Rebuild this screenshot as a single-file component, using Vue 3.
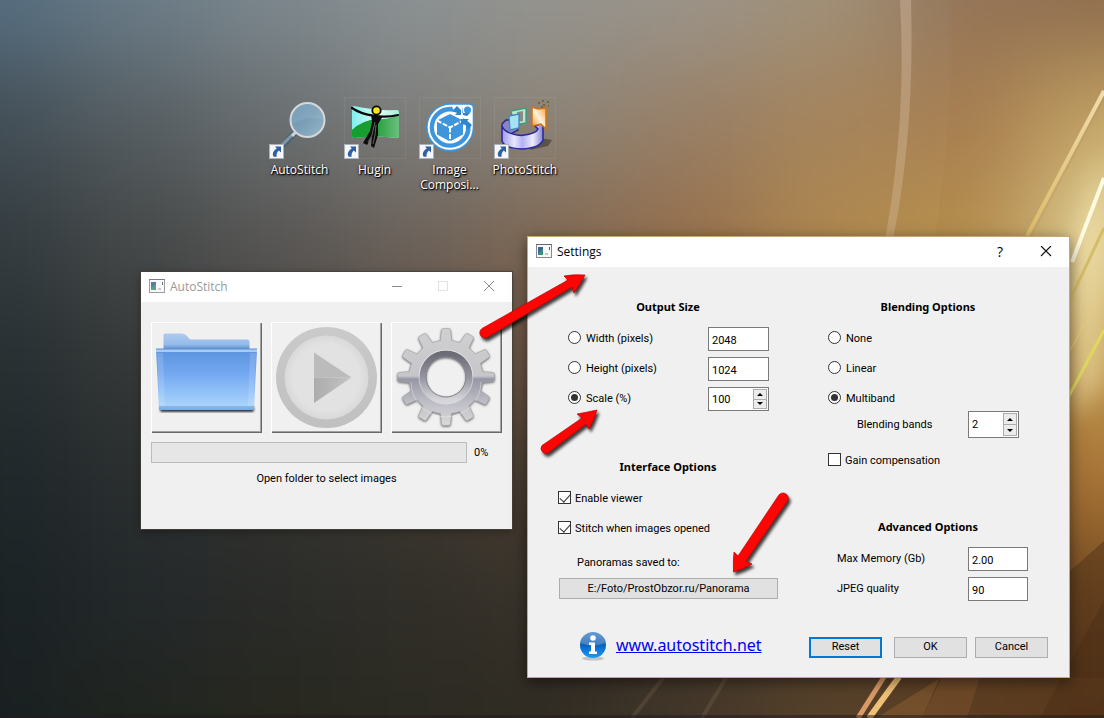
<script setup>
import { ref } from 'vue'

const sizeMode = ref('scale')
const blendMode = ref('multiband')
const width = ref('2048')
const height = ref('1024')
const scale = ref(100)
const bands = ref(2)
const gain = ref(false)
const viewer = ref(true)
const autoStitch = ref(true)
const memory = ref('2.00')
const quality = ref('90')

// Wallpaper colour field: one colour per grid node, softened by a blur.
const field = [
  ['#566e80', '#6b7c88', '#7d888e', '#8c9294', '#95948f', '#9b948a', '#a09078', '#93765c', '#8c6c50'],
  ['#424e56', '#565e62', '#696e70', '#7e7e7c', '#8c8478', '#987f66', '#a5845c', '#a87f52', '#c8aa68'],
  ['#333b3f', '#454848', '#585654', '#6c625a', '#806853', '#966f4c', '#b0884e', '#b8924e', '#e2d29a'],
  ['#272f32', '#353837', '#444240', '#584c42', '#6e5644', '#80603f', '#9a7440', '#a88044', '#c09a50'],
  ['#1f272a', '#2a2e2f', '#33332f', '#3d3831', '#4a3d30', '#5a452e', '#7a5a34', '#8c6030', '#a97436'],
  ['#1b2224', '#23282a', '#2a2b29', '#302e28', '#38322a', '#44382a', '#5c442a', '#644322', '#70481f'],
  ['#191f20', '#20241f', '#27271f', '#2b2a22', '#302b22', '#42362a', '#54402a', '#5a3c22', '#55361c']
]

const gearPath = (() => {
  const pt = (r, deg) => {
    const a = ((deg - 90) * Math.PI) / 180
    return (55 + r * Math.cos(a)).toFixed(1) + ' ' + (55 + r * Math.sin(a)).toFixed(1)
  }
  let d = ''
  for (let i = 0; i < 12; i++) {
    const c = i * 30
    d += (i ? 'L' : 'M') + pt(37, c - 8.5) + 'L' + pt(47, c - 5.5) + 'Q' + pt(48.5, c - 5) + ' ' + pt(48.5, c - 3.5)
    d += 'L' + pt(48.5, c + 3.5) + 'Q' + pt(48.5, c + 5) + ' ' + pt(47, c + 5.5) + 'L' + pt(37, c + 8.5)
    d += 'A37 37 0 0 1 ' + pt(37, c + 21.5)
  }
  return d + 'Z M75 55A20 20 0 1 0 35 55A20 20 0 1 0 75 55Z'
})()
</script>

<template>
  <main class="desktop">
    <svg class="wallpaper" viewBox="0 0 1104 718" preserveAspectRatio="none" aria-hidden="true">
      <defs>
        <filter id="soft" x="-20%" y="-20%" width="140%" height="140%" color-interpolation-filters="sRGB"><feGaussianBlur stdDeviation="48" /></filter>
        <filter id="glow" x="-100%" y="-50%" width="300%" height="200%" color-interpolation-filters="sRGB"><feGaussianBlur stdDeviation="12" /></filter>
        <linearGradient id="ray" x1="0" y1="0" x2="0" y2="1"><stop offset="0" stop-color="#f0dcae" /><stop offset="1" stop-color="#dcbc68" /></linearGradient>
        <linearGradient id="arc" x1="0" y1="0" x2="0" y2="1"><stop offset="0" stop-color="#c4a890" stop-opacity=".6" /><stop offset="1" stop-color="#c9ad80" stop-opacity=".55" /></linearGradient>
      </defs>
      <g filter="url(#soft)">
        <template v-for="(row, r) in field" :key="r">
          <rect
            v-for="(c, i) in row" :key="i" :fill="c"
            :x="i === 0 ? -300 : i * 138 - 69" :y="r === 0 ? -300 : r * 120 - 60"
            :width="i === 0 || i === 8 ? 371 : 140" :height="r === 0 || r === 6 ? 362 : 122"
          />
        </template>
      </g>
      <path d="M900 0H911Q915 130 893 240H885Q907 120 900 0Z" fill="url(#arc)" />
      <path d="M952 0Q953 130 934 240H1030L1104 100V0Z" fill="#a06a3c" opacity=".1" />
      <path d="M1104 150L1072 245V420L1104 380Z" fill="#fff4c0" opacity=".5" filter="url(#glow)" />
      <path d="M1104 91L1027 236" stroke="url(#ray)" stroke-width="4" />
      <path d="M1104 178L1072 262" stroke="#fffbe0" stroke-width="4" />
      <path d="M1104 228L1070 300" stroke="#d4bd68" stroke-width="3" />
      <path d="M1104 330L1069 396" stroke="#dfd760" stroke-width="3" />
      <path d="M1104 290L1069 352" stroke="#e6cb85" stroke-width="1" />
      <path d="M1104 541L1069 572V678H1104Z" fill="#4c2f18" opacity=".45" />
      <path d="M1104 600L1040 718H1104Z" fill="#422814" opacity=".3" />
      <path d="M942 677L876 718H922L940 677Z" fill="#9a6a38" opacity=".4" />
      <path d="M980 677L967 718H922L942 677Z" fill="#8c5c30" opacity=".35" />
      <path d="M884 677L858 718" stroke="#d99a68" stroke-width="5" />
      <path d="M899 677L869 718" stroke="#efc078" stroke-width="6" />
      <path d="M663 678L632 718M726 678L702 718" stroke="#8a735a" stroke-width="4" opacity=".25" />
      <rect y="715" width="1104" height="3" fill="#221a20" opacity=".5" />
    </svg>

    <svg class="sprites" aria-hidden="true">
      <symbol id="shortcut" viewBox="0 0 15 15">
        <rect width="15" height="15" fill="#a9b0b8" /><rect x="1" y="1" width="13" height="13" fill="#f5f7fa" />
        <path d="M6 2.500H12V8.500L9.800 6.500C8 8.200 7.300 10 7.600 12.800H4.600C2.800 9.500 4.500 6.500 7.800 4.500Z" fill="#2c5fa4" />
      </symbol>
      <symbol id="appicon" viewBox="0 0 16 14">
        <rect x=".5" y=".5" width="15" height="13" fill="#f8f8f8" stroke="#8a8a90" />
        <path d="M0 .5H16" stroke="#66676b" />
        <rect x="2" y="3" width="5" height="8" fill="#3b8f7c" /><path d="M2 3H7V5L2 9Z" fill="#3c6596" />
        <path d="M13.500 3V6" stroke="#4b5870" /><rect x="9" y="9" width="3" height="2" fill="#c3c6c9" />
      </symbol>
    </svg>

    <nav class="shortcuts" aria-label="Desktop">
      <button class="shortcut" type="button">
        <svg viewBox="0 0 62 62">
          <defs><linearGradient id="lens" x1="0" y1="0" x2="1" y2="1"><stop offset="0" stop-color="#6b95b5" /><stop offset=".5" stop-color="#7b9fb8" /><stop offset="1" stop-color="#9ab7c8" /></linearGradient></defs>
          <path d="M25 36L14 49" stroke="#4d6472" stroke-width="6" />
          <path d="M25 36L13 48" stroke="#7f98a8" stroke-width="3" />
          <path d="M28 34L23 39" stroke="#cdd3d8" stroke-width="3" />
          <circle cx="38.500" cy="23" r="17" fill="url(#lens)" stroke="#d3d7da" stroke-width="2" />
          <path d="M22 23A16.500 16.500 0 0 1 55 23Q38 18 22 27Z" fill="#fff" opacity=".08" />
          <use href="#shortcut" y="47" width="15" height="15" />
        </svg>
        <span>AutoStitch</span>
      </button>
      <button class="shortcut framed" type="button">
        <svg viewBox="0 0 62 62">
          <defs>
            <linearGradient id="sky" x1="0" x2="1"><stop offset="0" stop-color="#7ff0ee" /><stop offset=".6" stop-color="#e0fbf4" /><stop offset="1" stop-color="#9ff0dc" /></linearGradient>
            <linearGradient id="grass" x1="0" x2="1"><stop offset="0" stop-color="#12a02a" /><stop offset=".45" stop-color="#1c9c34" /><stop offset="1" stop-color="#6cbf7e" /></linearGradient>
          </defs>
          <path d="M10 9Q32 14 53 13Q55 13 55 15V39Q55 41 53 41Q32 38 10 41Q8 41 8 39V11Q8 9 10 9Z" fill="url(#sky)" />
          <path d="M8 33Q18 23 34 22Q46 23 55 17V39Q55 41 53 41Q32 38 10 41Q8 41 8 39Z" fill="url(#grass)" />
          <path d="M8 11C18 18 38 22 54 18" fill="none" stroke="#080808" stroke-width="2.200" stroke-linecap="round" />
          <path d="M27 17Q33 21 39 19L34 27V38L30 51L27 49L28 39L23 48L19 46L26 34L28 25Z" fill="#0c0c0c" />
          <path d="M31 25L28 38L24 45M32 28L31 38L29 47" stroke="#60635f" stroke-width="1" fill="none" />
          <circle cx="32.500" cy="13.500" r="4.200" fill="#ffe51e" stroke="#080808" stroke-width="1.800" />
          <use href="#shortcut" y="47" width="15" height="15" />
        </svg>
        <span>Hugin</span>
      </button>
      <button class="shortcut framed" type="button">
        <svg viewBox="0 0 62 62">
          <path d="M31 6.500H51Q55 6.500 55 10.500V30A24 24 0 1 1 31 6.500Z" fill="#3e95dc" />
          <path d="M31 8.800H50Q52.700 8.800 52.700 11.500V30A21.500 21.500 0 1 1 31 8.800Z" fill="none" stroke="#fff" stroke-width="2" />
          <circle cx="31" cy="30.500" r="16.800" fill="#3e95dc" stroke="#3e95dc" stroke-width="2" />
          <circle cx="31" cy="30.500" r="16" fill="#fff" />
          <path d="M31 17L44 23.500V37.500L31 44.500L18 37.500V23.500Z" fill="#3e95dc" />
          <path d="M18 23.500L31 30.500L44 23.500M31 30.500V46" fill="none" stroke="#fff" stroke-width="2" stroke-dasharray="5 1.500" />
          <path d="M33 9H52V27L46 22L36 18Z" fill="#fff" />
          <circle cx="48.500" cy="13" r="3.500" fill="#3e95dc" />
          <path d="M33 14L38 9L42 13L42 18H36L38 16ZM53 28L48 33L47 28L42 27V22H50L48 24ZM43 9V16H51L48 19L44 18Z" fill="#2f86d0" />
          <use href="#shortcut" y="47" width="15" height="15" />
        </svg>
        <span>Image Composi...</span>
      </button>
      <button class="shortcut framed" type="button">
        <svg viewBox="0 0 62 62">
          <defs>
            <linearGradient id="band" x1="0" x2="1"><stop offset="0" stop-color="#9c9be6" /><stop offset=".3" stop-color="#e8e6ff" /><stop offset=".5" stop-color="#b3b1f0" /><stop offset=".75" stop-color="#eeecff" /><stop offset="1" stop-color="#8583d0" /></linearGradient>
            <linearGradient id="flame" x1="0" y1="1" x2="1" y2="0"><stop offset="0" stop-color="#f08a1c" /><stop offset=".5" stop-color="#fff4dc" /><stop offset="1" stop-color="#f3a03c" /></linearGradient>
          </defs>
          <path d="M46 41L58 43L54 49L36 53Z" fill="#3c3530" opacity=".6" />
          <path d="M8 27L12 23H24V33L14 38Q8 34 8 27Z" fill="#8886c8" stroke="#29277c" stroke-width="1.300" />
          <path d="M8 29Q11 37 27 38.500Q42 37 44 32L41 29L49 26V43Q46 51 28 52Q10 51 8 44Z" fill="url(#band)" stroke="#29279c" stroke-width="1.500" />
          <path d="M17 14L32 11V26L20 28Z" fill="#b4ead2" stroke="#3f9a7e" stroke-width="1.300" />
          <path d="M23 15L29 14V24L24 25Z" fill="#8a8c86" />
          <path d="M15 19L25 17V31L16 33Z" fill="#a4e4f2" stroke="#4384bf" stroke-width="1.300" />
          <path d="M38 10L44 12L52 11V32L47 27L38 29Z" fill="url(#flame)" stroke="#d07412" stroke-width="1.500" />
          <path d="M44 6H46M49 8H51M48 4H50M53 5H55M54 9H55M47 10H49" stroke="#7a5818" stroke-width="1.500" />
          <use href="#shortcut" y="47" width="15" height="15" />
        </svg>
        <span>PhotoStitch</span>
      </button>
    </nav>

    <section class="window main" aria-label="AutoStitch">
      <header class="titlebar">
        <svg class="appicon" viewBox="0 0 16 14"><use href="#appicon" /></svg>
        <span class="title">AutoStitch</span>
        <button class="sys" type="button" aria-label="Minimize"><svg viewBox="0 0 12 12"><path d="M1 5.500H11" stroke="#8a8a8a" /></svg></button>
        <button class="sys" type="button" aria-label="Maximize"><svg viewBox="0 0 12 12"><rect x="1.500" y=".5" width="9" height="9" fill="none" stroke="#e2e2e2" /></svg></button>
        <button class="sys" type="button" aria-label="Close"><svg viewBox="0 0 12 12"><path d="M1 0L11 10M11 0L1 10" stroke="#8a8a8a" /></svg></button>
      </header>
      <div class="main-body">
        <div class="tools">
          <button class="tool" type="button" aria-label="Open folder">
            <svg viewBox="0 0 111 111">
              <defs>
                <linearGradient id="back" x1="0" y1="0" x2="0" y2="1"><stop offset="0" stop-color="#aecbee" /><stop offset=".7" stop-color="#94bbe8" /><stop offset="1" stop-color="#5c92cf" /></linearGradient>
                <linearGradient id="front" x1="0" y1="0" x2="0" y2="1"><stop offset="0" stop-color="#5c94df" /><stop offset=".4" stop-color="#73a8f0" /><stop offset=".92" stop-color="#a8d3fc" /><stop offset="1" stop-color="#7aaee4" /></linearGradient>
                <filter id="drop"><feGaussianBlur stdDeviation="1" /></filter>
              </defs>
              <rect x="9" y="84" width="94" height="6" rx="2" fill="#303840" filter="url(#drop)" />
              <path d="M12.500 27V13Q12.500 11.500 14.500 11.500H31Q34 11.500 36 14L39 17.500H96Q98.500 17.500 98.500 20V27Z" fill="url(#back)" />
              <path d="M5 27.500H106L103 86Q103 88 101 88H10Q8 88 8 86Z" fill="url(#front)" />
              <path d="M5 28H106V30H5Z" fill="#a9cbf5" /><path d="M5 27H106" stroke="#5b91d2" />
              <path d="M6 31L12 31L14 84L8.500 84ZM105 31H99L97 84H102.500Z" fill="#fff" opacity=".14" />
              <path d="M8 84H103V88H8Z" fill="#78ace4" opacity=".6" />
            </svg>
          </button>
          <button class="tool" type="button" aria-label="Stitch">
            <svg viewBox="0 0 111 111">
              <defs>
                <linearGradient id="tri" x1="0" x2="1"><stop offset="0" stop-color="#acacac" /><stop offset="1" stop-color="#c4c4c4" /></linearGradient>
                <linearGradient id="rim" x1="0" y1="0" x2="0" y2="1"><stop offset="0" stop-color="#cacaca" /><stop offset="1" stop-color="#c0c0c0" /></linearGradient>
                <radialGradient id="disc"><stop offset=".8" stop-color="#e2e2e2" /><stop offset="1" stop-color="#d9d9d9" /></radialGradient>
              </defs>
              <circle cx="55.500" cy="55.500" r="50.500" fill="url(#rim)" />
              <circle cx="55.500" cy="55.500" r="41.500" fill="url(#disc)" stroke="#dadada" />
              <path d="M43 30.500L80.500 55.500H43Z" fill="#bbb" /><path d="M43 55.500H80.500L43 81Z" fill="url(#tri)" />
            </svg>
          </button>
          <button class="tool" type="button" aria-label="Settings">
            <svg viewBox="0 0 111 111">
              <defs>
                <linearGradient id="metal" x1="0" y1="0" x2="0" y2="1"><stop offset="0" stop-color="#d0d0d2" /><stop offset=".49" stop-color="#c6c6ca" /><stop offset=".52" stop-color="#9796a6" /><stop offset=".75" stop-color="#bcbcc4" /><stop offset="1" stop-color="#dadadb" /></linearGradient>
                <linearGradient id="bore" x1="0" y1="0" x2="0" y2="1"><stop offset="0" stop-color="#6c6c76" /><stop offset=".5" stop-color="#9494a0" /><stop offset="1" stop-color="#d6d6da" /></linearGradient>
                <filter id="gearshade" x="-10%" y="-10%" width="120%" height="120%" color-interpolation-filters="sRGB"><feDropShadow dx="0" dy="1" stdDeviation="1" flood-color="#333" flood-opacity=".7" /></filter>
              </defs>
              <path :d="gearPath" fill="url(#metal)" fill-rule="evenodd" filter="url(#gearshade)" stroke="#a2a2a6" stroke-width=".6" />
              <circle cx="55" cy="55" r="23" fill="none" stroke="url(#bore)" stroke-width="7" />
              <circle cx="55" cy="55" r="27" fill="none" stroke="#fff" stroke-opacity=".45" stroke-width="1" />
              <path d="M20 60A35 35 0 0 0 90 60" fill="none" stroke="#fff" stroke-opacity=".35" />
              <circle cx="55" cy="55" r="20" fill="none" stroke="#88888e" stroke-width="1" />
            </svg>
          </button>
        </div>
        <div class="progress-row">
          <progress id="stitch-progress" value="0" max="100"></progress>
          <label for="stitch-progress">0%</label>
        </div>
        <p class="status">Open folder to select images</p>
      </div>
    </section>

    <section class="window settings" role="dialog" aria-label="Settings">
      <header class="titlebar">
        <svg class="appicon" viewBox="0 0 16 14"><use href="#appicon" /></svg>
        <span class="title">Settings</span>
        <button class="sys help" type="button">?</button>
        <button class="sys" type="button" aria-label="Close"><svg viewBox="0 0 12 12"><path d="M1 0L11 10M11 0L1 10" stroke="#111" stroke-width="1.200" /></svg></button>
      </header>
      <form class="settings-body" @submit.prevent>
        <div class="columns">
          <div class="column">
            <h2>Output Size</h2>
            <div class="row inset">
              <label><input v-model="sizeMode" type="radio" name="size" value="width" />Width (pixels)</label>
              <input v-model="width" class="field" type="text" aria-label="Width (pixels)" />
            </div>
            <div class="row inset">
              <label><input v-model="sizeMode" type="radio" name="size" value="height" />Height (pixels)</label>
              <input v-model="height" class="field" type="text" aria-label="Height (pixels)" />
            </div>
            <div class="row inset">
              <label><input v-model="sizeMode" type="radio" name="size" value="scale" />Scale (%)</label>
              <span class="spin">
                <input v-model="scale" type="text" aria-label="Scale (%)" />
                <span class="steps">
                  <button type="button" aria-label="Increase scale" @click="scale++"><i class="up"></i></button>
                  <button type="button" aria-label="Decrease scale" @click="scale--"><i class="down"></i></button>
                </span>
              </span>
            </div>
            <h2 class="next">Interface Options</h2>
            <div class="row"><label class="tick"><input v-model="viewer" type="checkbox" />Enable viewer</label></div>
            <div class="row"><label class="tick"><input v-model="autoStitch" type="checkbox" />Stitch when images opened</label></div>
            <label class="saved" for="path">Panoramas saved to:</label>
            <button id="path" class="btn path" type="button">E:/Foto/ProstObzor.ru/Panorama</button>
          </div>
          <div class="column right">
            <h2>Blending Options</h2>
            <div class="row"><label><input v-model="blendMode" type="radio" name="blend" value="none" />None</label></div>
            <div class="row"><label><input v-model="blendMode" type="radio" name="blend" value="linear" />Linear</label></div>
            <div class="row"><label><input v-model="blendMode" type="radio" name="blend" value="multiband" />Multiband</label></div>
            <div class="pair bands">
              <label for="bands">Blending bands</label>
              <span class="spin tall">
                <input id="bands" v-model="bands" type="text" />
                <span class="steps">
                  <button type="button" aria-label="Increase bands" @click="bands++"><i class="up"></i></button>
                  <button type="button" aria-label="Decrease bands" @click="bands--"><i class="down"></i></button>
                </span>
              </span>
            </div>
            <div class="row gain"><label class="tick"><input v-model="gain" type="checkbox" />Gain compensation</label></div>
            <h2 class="next">Advanced Options</h2>
            <div class="pair"><label for="memory">Max Memory (Gb)</label><input id="memory" v-model="memory" class="field" type="text" /></div>
            <div class="pair"><label for="quality">JPEG quality</label><input id="quality" v-model="quality" class="field" type="text" /></div>
          </div>
        </div>
        <footer class="footer">
          <svg class="info" viewBox="0 0 28 30" aria-hidden="true">
            <defs>
              <linearGradient id="ball" x1="0" y1="0" x2="0" y2="1"><stop offset="0" stop-color="#3c83c8" /><stop offset=".5" stop-color="#1560b4" /><stop offset=".52" stop-color="#0664c8" /><stop offset="1" stop-color="#1c9cf8" /></linearGradient>
            </defs>
            <ellipse cx="14" cy="27.500" rx="11" ry="2" fill="#000" opacity=".18" />
            <circle cx="14" cy="14" r="13" fill="url(#ball)" />
            <path d="M2 12A12 12 0 0 1 26 12Q14 17 2 12Z" fill="#fff" opacity=".2" />
            <circle cx="14" cy="7" r="2.800" fill="#fff" />
            <path d="M10 11.500H16V20.500H18V23H10V20.500H12V14H10Z" fill="#fff" />
          </svg>
          <a href="#">www.autostitch.net</a>
          <span class="actions">
            <button class="btn default" type="button">Reset</button>
            <button class="btn ok" type="submit">OK</button>
            <button class="btn" type="button">Cancel</button>
          </span>
        </footer>
      </form>
    </section>

    <svg class="arrows" viewBox="0 0 1104 718" aria-hidden="true">
      <defs><filter id="ashadow" x="-20%" y="-20%" width="150%" height="150%" color-interpolation-filters="sRGB"><feDropShadow dx="2" dy="3" stdDeviation="1.500" flood-color="#000" flood-opacity=".75" /></filter></defs>
      <g fill="#fb0505" stroke="#c40000" stroke-width=".7" stroke-linejoin="round">
        <path filter="url(#ashadow)" d="M482 328.500L568 280L564 276Q574 274 585 275Q580 284 574 293L572 287L488 337A5 5 0 0 1 482 328.500Z" />
        <path filter="url(#ashadow)" d="M542 445.500L582 418L577 414Q588 412 597 410Q594 420 589 429L586 424L548 453A5 5 0 0 1 542 445.500Z" />
        <path filter="url(#ashadow)" d="M778.500 495.500L738 556L734 552Q733 562 733.500 572Q743 569 752 564L746 561L787.500 501A5 5 0 0 0 778.500 495.500Z" />
      </g>
    </svg>
  </main>
</template>

<style>
html, body { margin: 0; }
</style>

<style scoped>
* { box-sizing: border-box; }
.desktop {
  position: relative;
  min-height: 100vh;
  overflow: hidden;
  background: #45403a;
  color: #000;
  font: 11px/18px Roboto, "Noto Sans", sans-serif;
}
button, input { font: inherit; color: inherit; }
.wallpaper { position: absolute; inset: 0; width: 100%; height: 100%; }
.sprites { position: absolute; width: 0; height: 0; }
.arrows { position: absolute; left: 0; top: 0; width: 1104px; pointer-events: none; }

.shortcuts { position: absolute; left: 262px; top: 97px; display: flex; align-items: flex-start; }
.shortcut {
  width: 75px;
  padding: 0;
  border: 0;
  background: none;
  display: flex;
  flex-direction: column;
  align-items: center;
  gap: 3px;
  color: #fff;
  font: 12px/15px "Open Sans", "Noto Sans", sans-serif;
  text-shadow: 1px 1px 1px #000, 0 1px 3px #000;
}
.shortcut svg { width: 62px; height: 62px; }
.framed svg { outline: 1px solid rgba(255, 255, 255, .06); outline-offset: -1px; }
.shortcut span { max-width: 64px; }

.window { position: absolute; background: #f0f0f0; }
.main { left: 141px; top: 272px; width: 371px; box-shadow: 0 0 0 1px rgba(70, 66, 60, .8), 0 2px 8px rgba(0, 0, 0, .35); }
.settings { left: 527px; top: 236px; width: 543px; border: 1px solid #c4aa78; box-shadow: 0 4px 14px rgba(0, 0, 0, .5); }
.titlebar {
  display: flex;
  align-items: center;
  height: 30px;
  padding-left: 8px;
  background: #fff;
  font: 12px/18px "Open Sans", "Noto Sans", sans-serif;
}
.main .titlebar { color: #999; }
.appicon { width: 16px; height: 14px; margin: 0 5px 2px 0; }
.main .appicon { opacity: .85; }
.title { flex: 1; }
.sys { width: 46px; height: 30px; padding: 0; border: 0; background: none; display: grid; place-items: center; }
.sys svg { width: 12px; height: 12px; }
.help { font-size: 14px; }

.main-body { padding: 20px 10px 41px; }
.tools { display: grid; grid-template-columns: repeat(3, 111px); gap: 9px; }
.tool {
  height: 111px;
  padding: 0;
  border: 0;
  background: #f0f0f0;
  box-shadow: inset 1px 1px #fff, inset -1px -1px #696969, inset -2px -2px #a0a0a0;
}
.tool svg { display: block; width: 100%; height: 100%; }
.progress-row { display: flex; align-items: center; gap: 7px; margin-top: 9px; }
progress { appearance: none; width: 316px; height: 21px; border: 1px solid #bcbcbc; background: #e6e6e6; }
progress::-webkit-progress-bar { background: #e6e6e6; }
progress::-webkit-progress-value { background: #06b025; }
.status { margin: 7px 0 0; text-align: center; }

.settings-body { padding: 31px 21px 15px 30px; }
.columns { display: grid; grid-template-columns: 220px 220px; justify-content: space-between; }
.column { display: flex; flex-direction: column; }
h2 { margin: 0 0 11px; font: 700 11px/18px "Noto Sans", "Open Sans", sans-serif; text-align: center; }
.right h2 { padding-right: 20px; }
h2.next { margin-top: 47px; }
.right h2.next { margin-top: 45px; }
.row { display: flex; align-items: center; justify-content: space-between; height: 24px; }
.row + .row, .pair + .pair { margin-top: 6px; }
.inset { padding: 0 9px 0 10px; }
.row label { display: flex; align-items: center; gap: 5px; }
.row label.tick { gap: 4px; }
input[type="radio"], input[type="checkbox"] {
  appearance: none;
  display: grid;
  place-items: center;
  width: 13px;
  height: 13px;
  margin: 0 0 3px;
  border: 1px solid #333;
  background: #fff;
}
input[type="radio"] { border-radius: 50%; }
input[type="radio"]:checked::before { content: ""; width: 7px; height: 7px; border-radius: 50%; background: #333; }
input[type="checkbox"]:checked::before {
  content: "";
  width: 5px;
  height: 9px;
  margin-bottom: 3px;
  border: solid #333;
  border-width: 0 1px 1px 0;
  transform: rotate(42deg);
}
.field { width: 61px; height: 24px; padding: 2px 3px 0; border: 1px solid #7a7a7a; border-radius: 0; background: #fff; }
.spin { display: flex; width: 61px; height: 24px; padding: 1px; border: 1px solid #7a7a7a; background: #fff; }
.spin input { flex: 1; min-width: 0; padding: 1px 2px 0; border: 0; background: none; }
.tall { width: 51px; height: 27px; }
.steps { display: flex; flex-direction: column; width: 14px; }
.steps button {
  flex: 1;
  display: grid;
  place-items: center;
  min-height: 0;
  padding: 0;
  border: 1px solid #acacac;
  background: #ececec;
}
.steps button + button { border-top: 0; }
.up, .down { border: solid transparent; border-width: 0 3px; }
.up { border-bottom: 3px solid #000; }
.down { border-top: 3px solid #000; }
.saved { margin: 13px 0 6px 19px; }
.btn { width: 73px; height: 21px; padding: 0; border: 1px solid #adadad; background: #e1e1e1; line-height: 18px; }
.path { width: 219px; align-self: flex-end; }
.default { border: 2px solid #0078d7; line-height: 16px; }
.pair { display: flex; align-items: center; justify-content: space-between; padding: 0 20px 0 9px; }
.bands { padding: 0 29px 0 29px; }
.right .gain { margin-top: 11px; }
.pair .field { width: 60px; }
.footer { display: flex; align-items: center; height: 30px; margin-top: 31px; padding-left: 21px; }
.info { width: 28px; height: 30px; margin: 0 9px 2px 0; }
.footer a { margin-bottom: 4px; color: #0000f0; font: 16px/24px "Noto Sans", "Open Sans", sans-serif; }
.actions { display: flex; gap: 8px; margin-left: auto; }
.ok { margin-left: 4px; }
</style>
